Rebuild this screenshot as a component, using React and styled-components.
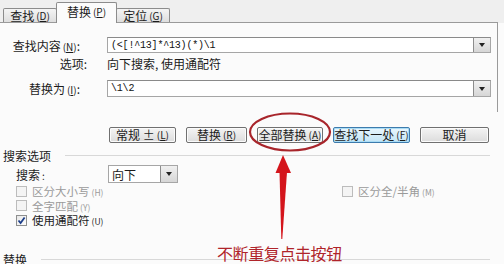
import React from 'react'
import styled, { createGlobalStyle } from 'styled-components'

const GlobalStyle = createGlobalStyle`
  html, body { margin: 0; padding: 0; }
  body {
    background: #fbfbfb;
    font-family: "Noto Sans CJK SC", "Noto Sans", sans-serif;
    font-size: 12px;
    color: #1c1c1c;
  }
`

const Dialog = styled.div`
  position: relative;
  width: 504px;
  height: 264px;
  overflow: hidden;
  background: #fbfbfb;
`

const TopBar = styled.div`
  background: #efefef;
`

const TabStrip = styled.div`
  display: flex;
  align-items: flex-end;
  height: 22px;
  margin-right: 6px;
  padding-left: 3px;
  border-bottom: 1px solid #9a9a9a;
`

const Tab = styled.div`
  box-sizing: border-box;
  width: ${p => p.$width}px;
  height: ${p => (p.$active ? 21 : 14)}px;
  margin-bottom: ${p => (p.$active ? -1 : 0)}px;
  margin-left: ${p => (p.$first ? 0 : -1)}px;
  display: flex;
  align-items: center;
  justify-content: center;
  border: 1px solid #8c8c8c;
  border-bottom: none;
  border-radius: 2px 2px 0 0;
  background: ${p => (p.$active ? '#fbfbfb' : 'linear-gradient(#f4f4f4, #dedede)')};
  position: relative;
  z-index: ${p => (p.$active ? 1 : 0)};
  font-size: 12px;
  line-height: 1;
  padding-bottom: ${p => (p.$active ? 3 : 0)}px;
`

const Accel = styled.span`
  font-size: 10px;
  margin-left: 2px;
  color: inherit;
  u { text-decoration: underline; }
`

const Panel = styled.div`
  height: 89px;
  margin-right: 6px;
  border-right: 1px solid #9a9a9a;
  display: flex;
  flex-direction: column;
`

const FieldRow = styled.div`
  display: flex;
  align-items: center;
  height: ${p => p.$h || 16}px;
  margin-top: ${p => p.$mt || 0}px;
`

const Label = styled.div`
  box-sizing: border-box;
  width: 107px;
  text-align: right;
  padding-right: ${p => p.$pr || 27}px;
  font-size: 12px;
  white-space: nowrap;
`

const InputBox = styled.div`
  box-sizing: border-box;
  width: 384px;
  height: ${p => p.$h || 16}px;
  display: flex;
  align-items: center;
  border: 1px solid #a6a6a6;
  border-top-color: #8a8a8a;
  background: #fff;
`

const InputText = styled.span`
  flex: 1;
  padding-left: 3px;
  font-family: "Liberation Mono", monospace;
  font-size: 10px;
  letter-spacing: -0.2px;
  color: #111;
  white-space: nowrap;
`

const DropBtn = styled.div`
  box-sizing: border-box;
  width: 17px;
  height: 100%;
  display: flex;
  align-items: center;
  justify-content: center;
  border-left: 1px solid #8c8c8c;
  background: linear-gradient(#f0f0f0, #d6d6d6);
`

const Caret = styled.span`
  width: 0;
  height: 0;
  border-left: 3px solid transparent;
  border-right: 3px solid transparent;
  border-top: 4px solid #222;
`

const InfoText = styled.span`
  font-size: 12px;
`

const ButtonRow = styled.div`
  display: flex;
  gap: 10px;
  margin-top: 15px;
  padding-left: 109px;
  height: 16px;
`

const Button = styled.div`
  box-sizing: border-box;
  width: ${p => p.$w}px;
  height: 16px;
  display: flex;
  align-items: center;
  justify-content: center;
  border: 1px solid ${p => (p.$focus ? '#3d7bad' : '#707070')};
  border-radius: 2px;
  background: ${p => (p.$focus ? 'linear-gradient(#eaf6fd, #c4e5f6)' : 'linear-gradient(#f4f4f4, #dcdcdc)')};
  box-shadow: inset 0 0 0 1px ${p => (p.$focus ? '#a9dcf5' : '#fbfbfb')};
  font-size: 12px;
  line-height: 1;
  white-space: nowrap;
`

const SectionHead = styled.div`
  display: flex;
  align-items: center;
  gap: 14px;
  margin-top: ${p => p.$mt}px;
  padding-left: 3px;
  padding-right: 14px;
  height: 13px;
  font-size: 12px;
`

const Rule = styled.div`
  flex: 1;
  height: 1px;
  background: #d8d8d8;
`

const SearchRow = styled.div`
  display: flex;
  align-items: center;
  margin-top: 3px;
  height: 18px;
  padding-left: 16px;
`

const SearchLabel = styled.span`
  width: 92px;
  font-size: 12px;
`

const SelectBox = styled.div`
  box-sizing: border-box;
  width: 70px;
  height: 18px;
  display: flex;
  align-items: center;
  border: 1px solid #a6a6a6;
  background: #fff;
`

const SelectText = styled.span`
  flex: 1;
  padding-left: 3px;
  font-size: 12px;
`

const CheckGrid = styled.div`
  display: grid;
  grid-template-columns: 326px 1fr;
  grid-auto-rows: 14.5px;
  margin-top: 1px;
  padding-left: 16px;
`

const CheckItem = styled.div`
  display: flex;
  align-items: center;
  gap: 5px;
  height: 14.5px;
  font-size: 11.5px;
  color: ${p => (p.$disabled ? '#9a9a9a' : '#1c1c1c')};
  white-space: nowrap;
`

const Box = styled.span`
  box-sizing: border-box;
  width: 11px;
  height: 11px;
  display: flex;
  align-items: center;
  justify-content: center;
  border: 1px solid ${p => (p.$disabled ? '#bcbcbc' : '#8e8f8f')};
  background: ${p => (p.$disabled ? '#f4f4f4' : 'linear-gradient(135deg, #e8e8e8, #fdfdfd)')};
`

const Small = styled.span`
  font-size: 8.5px;
  margin-left: 2px;
`

const Overlay = styled.svg`
  position: absolute;
  left: 0;
  top: 0;
  pointer-events: none;
`

const Note = styled.div`
  position: absolute;
  left: 217px;
  top: 241px;
  font-size: 16px;
  letter-spacing: -0.4px;
  color: #b0242a;
  white-space: nowrap;
`

const CheckMark = () => (
  <svg width="9" height="9" viewBox="0 0 9 9">
    <path d="M1.5 4.5 L3.6 7 L7.6 1.5" fill="none" stroke="#1d3f8a" strokeWidth="1.8" />
  </svg>
)

const Check = ({ checked, disabled, children, accel }) => (
  <CheckItem $disabled={disabled}>
    <Box $disabled={disabled}>{checked && <CheckMark />}</Box>
    <span>
      {children}
      <Small>({accel})</Small>
    </span>
  </CheckItem>
)

const App = () => {
  return (
    <Dialog>
      <GlobalStyle />
      <TopBar>
        <TabStrip>
          <Tab $width={54} $first>
            查找<Accel>(<u>D</u>)</Accel>
          </Tab>
          <Tab $width={61} $active>
            替换<Accel>(<u>P</u>)</Accel>
          </Tab>
          <Tab $width={54}>
            定位<Accel>(<u>G</u>)</Accel>
          </Tab>
        </TabStrip>
      </TopBar>

      <Panel>
        <FieldRow $mt={14}>
          <Label>
            查找内容<Accel>(<u>N</u>)</Accel>:
          </Label>
          <InputBox>
            <InputText>{'(<[!^13]*^13)(*)\\1'}</InputText>
            <DropBtn><Caret /></DropBtn>
          </InputBox>
        </FieldRow>
        <FieldRow $mt={3} $h={14}>
          <Label $pr={20}>选项:</Label>
          <InfoText>向下搜索, 使用通配符</InfoText>
        </FieldRow>
        <FieldRow $mt={10} $h={17}>
          <Label>
            替换为<Accel>(<u>I</u>)</Accel>:
          </Label>
          <InputBox $h={17}>
            <InputText>{'\\1\\2'}</InputText>
            <DropBtn><Caret /></DropBtn>
          </InputBox>
        </FieldRow>
      </Panel>

      <ButtonRow>
        <Button $w={67}>常规 ± <Accel>(<u>L</u>)</Accel></Button>
        <Button $w={61}>替换<Accel>(<u>R</u>)</Accel></Button>
        <Button $w={66}>全部替换<Accel>(<u>A</u>)</Accel></Button>
        <Button $w={77} $focus>查找下一处<Accel>(<u>F</u>)</Accel></Button>
        <Button $w={69}>取消</Button>
      </ButtonRow>

      <SectionHead $mt={6}>
        <span>搜索选项</span>
        <Rule />
      </SectionHead>
      <SearchRow>
        <SearchLabel>搜索<Accel>:</Accel></SearchLabel>
        <SelectBox>
          <SelectText>向下</SelectText>
          <DropBtn><Caret /></DropBtn>
        </SelectBox>
      </SearchRow>
      <CheckGrid>
        <Check disabled accel="H">区分大小写</Check>
        <Check disabled accel="M">区分全/半角</Check>
        <Check disabled accel="Y">全字匹配</Check>
        <span />
        <Check checked accel="U">使用通配符</Check>
        <span />
      </CheckGrid>
      <SectionHead $mt={25}>
        <span>替换</span>
        <Rule />
      </SectionHead>

      <Overlay width="504" height="264" viewBox="0 0 504 264">
        <ellipse cx="290" cy="132" rx="40" ry="18.5" fill="none" stroke="#a8252b" strokeWidth="2.2" />
        <polygon points="283,155 275.5,173 291,173" fill="#d4151c" />
        <polygon points="279.5,172 287,172 282.3,239 281.3,239" fill="#d4151c" />
      </Overlay>
      <Note>不断重复点击按钮</Note>
    </Dialog>
  )
}

export default App
